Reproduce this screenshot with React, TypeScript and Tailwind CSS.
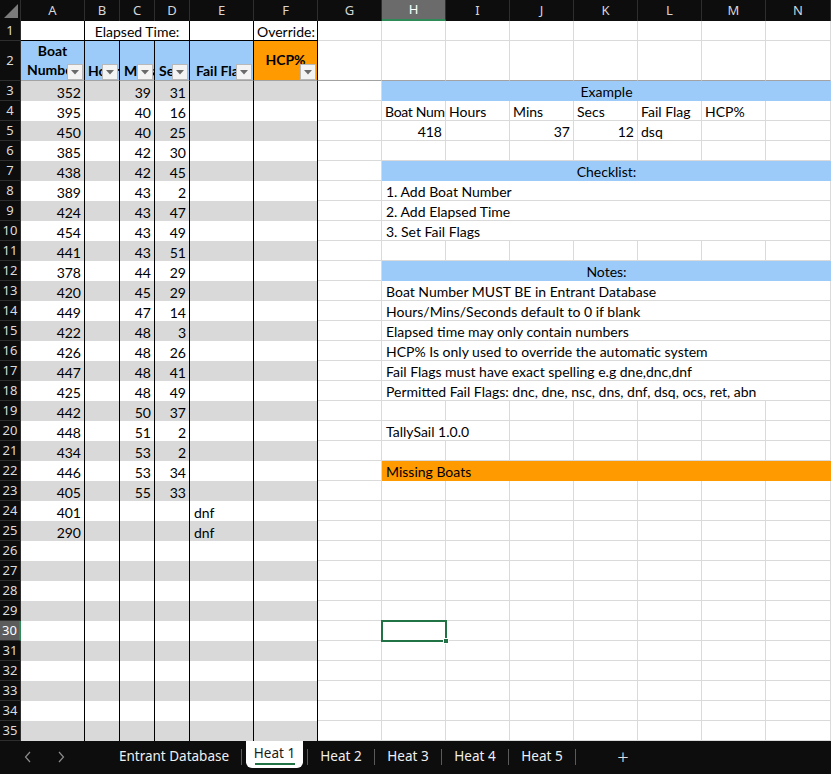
import React from "react";

const LETTERS = ["A", "B", "C", "D", "E", "F", "G", "H", "I", "J", "K", "L", "M", "N"];

// [boat, mins, secs, flag]
const ENTRIES: [string, string, string, string][] = [
  ["352", "39", "31", ""],
  ["395", "40", "16", ""],
  ["450", "40", "25", ""],
  ["385", "42", "30", ""],
  ["438", "42", "45", ""],
  ["389", "43", "2", ""],
  ["424", "43", "47", ""],
  ["454", "43", "49", ""],
  ["441", "43", "51", ""],
  ["378", "44", "29", ""],
  ["420", "45", "29", ""],
  ["449", "47", "14", ""],
  ["422", "48", "3", ""],
  ["426", "48", "26", ""],
  ["447", "48", "41", ""],
  ["425", "48", "49", ""],
  ["442", "50", "37", ""],
  ["448", "51", "2", ""],
  ["434", "53", "2", ""],
  ["446", "53", "34", ""],
  ["405", "55", "33", ""],
  ["401", "", "", "dnf"],
  ["290", "", "", "dnf"],
];

const CHECKLIST = ["1. Add Boat Number", "2. Add Elapsed Time", "3. Set Fail Flags"];
const NOTES = [
  "Boat Number MUST BE in Entrant Database",
  "Hours/Mins/Seconds default to 0 if blank",
  "Elapsed time may only contain numbers",
  "HCP% Is only used to override the automatic system",
  "Fail Flags must have exact spelling e.g dne,dnc,dnf",
  "Permitted Fail Flags: dnc, dne, nsc, dns, dnf, dsq, ocs, ret, abn",
];

const cell = "h-full overflow-hidden whitespace-nowrap flex items-end leading-[17px] text-[14px] text-black";
const grid = "border-r border-b border-[#dadada]";

function FilterButton() {
  return (
    <div className="absolute right-[1px] bottom-0 w-[16px] h-[16px] bg-[#f3f3f3] border border-[#b8b8b8] flex items-center justify-center z-10">
      <svg width="8" height="5" viewBox="0 0 8 5">
        <polygon points="0,0 8,0 4,4.5" fill="#6a6a6a" />
      </svg>
    </div>
  );
}

function RowHeader({ n }: { n: number }) {
  const sel = n === 30;
  return (
    <div
      className={`h-full flex items-center justify-center text-[13px] font-['Noto_Sans'] border-b border-[#2e2e2e] ${
        sel ? "bg-[#5c5c5c] text-white border-r-2 border-r-[#2e8b57]" : "bg-[#0d0d0d] text-[#dcdcdc] border-r border-r-[#2e2e2e]"
      }`}
    >
      {n}
    </div>
  );
}

function Empty({ extra = "" }: { extra?: string }) {
  return <div className={`${cell} ${grid} ${extra}`} />;
}

function Banner({ text, color, align = "center" }: { text: string; color: string; align?: string }) {
  return (
    <div className={`${cell} col-span-7 ${color} border-b border-transparent ${align === "center" ? "justify-center" : "pl-[4px]"}`}>
      {text}
    </div>
  );
}

function Wide({ text }: { text: string }) {
  return <div className={`${cell} col-span-7 ${grid} pl-[4px]`}>{text}</div>;
}

function rightCells(r: number) {
  if (r === 3) return [<Banner key="b" text="Example" color="bg-[#9ccbfa]" />];
  if (r === 7) return [<Banner key="b" text="Checklist:" color="bg-[#9ccbfa]" />];
  if (r === 12) return [<Banner key="b" text="Notes:" color="bg-[#9ccbfa]" />];
  if (r === 22) return [<Banner key="b" text="Missing Boats" color="bg-[#ff9a00]" align="left" />];
  if (r >= 8 && r <= 10) return [<Wide key="w" text={CHECKLIST[r - 8]} />];
  if (r >= 13 && r <= 18) return [<Wide key="w" text={NOTES[r - 13]} />];
  if (r === 4) {
    return ["Boat Num", "Hours", "Mins", "Secs", "Fail Flag", "HCP%", ""].map((t, i) => (
      <div key={i} className={`${cell} ${grid} ${i === 0 ? "pl-[3px] tracking-[-0.3px]" : "pl-[3px]"}`}>
        {t}
      </div>
    ));
  }
  if (r === 5) {
    return ["418", "", "37", "12", "dsq", "", ""].map((t, i) => (
      <div key={i} className={`${cell} ${grid} ${i === 4 ? "pl-[3px]" : "justify-end pr-[3px]"}`}>
        {t}
      </div>
    ));
  }
  if (r === 20) {
    return [
      <div key="t" className={`${cell} ${grid} col-span-2 pl-[4px]`}>
        TallySail 1.0.0
      </div>,
      ...[0, 1, 2, 3, 4].map((i) => <Empty key={i} />),
    ];
  }
  return [0, 1, 2, 3, 4, 5, 6].map((i) =>
    r === 30 && i === 0 ? (
      <div key={i} className={`${cell} ${grid} relative overflow-visible`}>
        <div className="absolute -left-[1px] -top-[1px] w-[66px] h-[22px] border-2 border-[#217346] z-20" />
        <div className="absolute right-[-4px] bottom-[-4px] w-[6px] h-[6px] bg-[#217346] border border-white z-20" />
      </div>
    ) : (
      <Empty key={i} />
    )
  );
}

function DataRow({ r }: { r: number }) {
  const e = ENTRIES[r - 3];
  const band = r % 2 === 1 ? "bg-[#d9d9d9]" : "bg-white";
  const lc = `${cell} ${band} border-r border-r-black`;
  return (
    <>
      <RowHeader n={r} />
      <div className={`${lc} justify-end pr-[3px]`}>{e?.[0]}</div>
      <div className={lc} />
      <div className={`${lc} justify-end pr-[3px]`}>{e?.[1]}</div>
      <div className={`${lc} justify-end pr-[3px]`}>{e?.[2]}</div>
      <div className={`${lc} pl-[4px]`}>{e?.[3]}</div>
      <div className={lc} />
      <Empty />
      {rightCells(r)}
    </>
  );
}

function Sheet() {
  const rows = Array.from({ length: 33 }, (_, i) => i + 3);
  const hdr = `${cell} border-r border-r-black border-b border-b-[#a3a3a3] relative font-bold`;
  return (
    <div className="grid grid-cols-[21px_64px_35px_35px_35px_64px_64px_64px_64px_64px_64px_64px_64px_64px_65px] grid-rows-[21px_20px_40px_repeat(33,20px)] w-[831px] bg-white">
      {/* column letters */}
      <div className="bg-[#0d0d0d] border-r border-[#2e2e2e] relative">
        <svg className="absolute left-0 top-0" width="21" height="21" viewBox="0 0 21 21">
          <polygon points="18,4 18,18 4,18" fill="#7b7b7b" />
        </svg>
      </div>
      {LETTERS.map((l) => (
        <div
          key={l}
          className={`flex items-center justify-center text-[13px] font-['Noto_Sans'] border-r border-[#2e2e2e] ${
            l === "H" ? "bg-[#6b6b6b] text-white border-b-2 border-b-[#2e8b57]" : "bg-[#0d0d0d] text-[#d6d6d6]"
          }`}
        >
          {l}
        </div>
      ))}

      {/* row 1 */}
      <RowHeader n={1} />
      <div className={`${cell} border-r border-b border-black`} />
      <div className={`${cell} col-span-3 justify-center border-r border-b border-black`}>Elapsed Time:</div>
      <div className={`${cell} border-r border-b border-black`} />
      <div className={`${cell} pl-[3px] border-r border-b border-black`}>Override:</div>
      {[0, 1, 2, 3, 4, 5, 6, 7].map((i) => (
        <Empty key={i} />
      ))}

      {/* row 2 */}
      <RowHeader n={2} />
      <div className={`${hdr} bg-[#9ccbfa] !whitespace-normal text-center justify-center leading-[19px] pb-[1px]`}>
        Boat Number
        <FilterButton />
      </div>
      <div className={`${hdr} bg-[#9ccbfa] pl-[3px] pb-[1px]`}>
        Hours
        <FilterButton />
      </div>
      <div className={`${hdr} bg-[#9ccbfa] pl-[4px] pb-[1px]`}>
        Mins
        <FilterButton />
      </div>
      <div className={`${hdr} bg-[#9ccbfa] pl-[4px] pb-[1px]`}>
        Secs
        <FilterButton />
      </div>
      <div className={`${hdr} bg-[#9ccbfa] pl-[6px] pb-[1px]`}>
        Fail Flag
        <FilterButton />
      </div>
      <div className={`${hdr} bg-[#ff9a00] !items-center justify-center pb-[2px]`}>
        HCP%
        <FilterButton />
      </div>
      {[0, 1, 2, 3, 4, 5, 6, 7].map((i) => (
        <Empty key={i} extra="!border-b-[#a3a3a3]" />
      ))}

      {rows.map((r) => (
        <DataRow key={r} r={r} />
      ))}
    </div>
  );
}

function Sep() {
  return <div className="w-[1px] h-[16px] bg-[#5a5a5a]" />;
}

function Chevron({ dir }: { dir: "l" | "r" }) {
  return (
    <svg width="8" height="12" viewBox="0 0 8 12">
      <polyline
        points={dir === "l" ? "6,1 1.5,6 6,11" : "2,1 6.5,6 2,11"}
        fill="none"
        stroke="#8c8c8c"
        strokeWidth="1.2"
      />
    </svg>
  );
}

function TabBar() {
  const tabs = ["Heat 2", "Heat 3", "Heat 4", "Heat 5"];
  return (
    <div className="h-[33px] bg-[#0d0d0d] flex items-start text-[13.5px] text-[#f0f0f0] font-['Noto_Sans']">
      <div className="w-[107px] h-[31px] flex items-center">
        <span className="ml-[24px] flex">
          <Chevron dir="l" />
        </span>
        <span className="ml-[25px] flex">
          <Chevron dir="r" />
        </span>
      </div>
      <div className="w-[134px] h-[31px] flex items-center justify-center">Entrant Database</div>
      <div className="h-[31px] flex items-center">
        <Sep />
      </div>
      <div className="mx-[4px] w-[57px] h-[27px] bg-white rounded-b-[6px] flex flex-col items-center justify-center text-[#1a1a1a]">
        <span className="leading-[18px]">Heat 1</span>
        <span className="w-[40px] h-[2px] bg-[#217346] mt-[1px]" />
      </div>
      {tabs.map((t) => (
        <React.Fragment key={t}>
          <div className="h-[31px] flex items-center">
            <Sep />
          </div>
          <div className="w-[66px] h-[31px] flex items-center justify-center">{t}</div>
        </React.Fragment>
      ))}
      <div className="h-[31px] flex items-center">
        <Sep />
      </div>
      <div className="w-[94px] h-[31px] flex items-center justify-center text-[20px] font-light text-[#e0e0e0]">+</div>
    </div>
  );
}

export default function App() {
  return (
    <div className="w-[831px] h-[774px] overflow-hidden bg-[#0d0d0d] font-['Lato',sans-serif]">
      <Sheet />
      <TabBar />
    </div>
  );
}
